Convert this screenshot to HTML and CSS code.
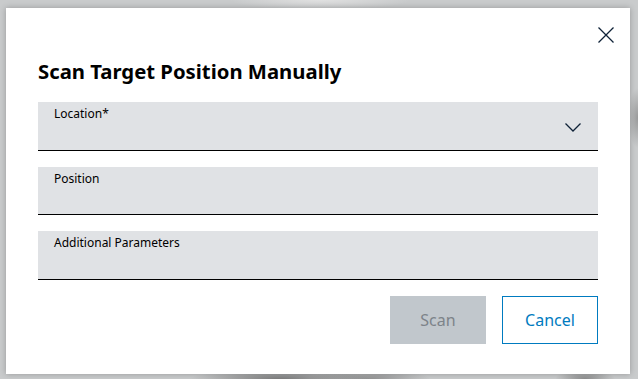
FILE: index.html
```html
<!DOCTYPE html>
<html lang="en">
<head>
<meta charset="utf-8">
<title>Scan Target Position Manually</title>
<link rel="stylesheet" href="styles.css">
</head>
<body>
<div class="backdrop">
  <div class="dialog" role="dialog" aria-labelledby="dlg-title">
    <button class="close" aria-label="Close">
      <svg width="16" height="16" viewBox="0 0 16 16" aria-hidden="true">
        <path d="M0.5 0.5 L15.5 15.5 M15.5 0.5 L0.5 15.5" stroke="currentColor" stroke-width="1.3" fill="none"/>
      </svg>
    </button>
    <h1 class="title" id="dlg-title">Scan Target Position Manually</h1>
    <div class="fields">
      <div class="field select">
        <span class="label">Location*</span>
        <svg class="chevron" width="16" height="9" viewBox="0 0 16 9" aria-hidden="true">
          <path d="M0.5 0.5 L8 8 L15.5 0.5" stroke="currentColor" stroke-width="1.3" fill="none"/>
        </svg>
      </div>
      <div class="field">
        <span class="label">Position</span>
      </div>
      <div class="field">
        <span class="label">Additional Parameters</span>
      </div>
    </div>
    <div class="actions">
      <button class="btn btn-primary" disabled>Scan</button>
      <button class="btn btn-secondary">Cancel</button>
    </div>
  </div>
</div>
</body>
</html>
```

FILE: styles.css
```css
html, body {
  margin: 0;
  padding: 0;
}

body {
  width: 638px;
  height: 379px;
  overflow: hidden;
  font-family: "Noto Sans", "Open Sans", sans-serif;
  background:
    radial-gradient(ellipse 90px 10px at 280px 379px, rgba(90,90,90,0.7), rgba(90,90,90,0) 100%),
    radial-gradient(ellipse 60px 10px at 370px 379px, rgba(110,110,110,0.6), rgba(110,110,110,0) 100%),
    radial-gradient(ellipse 30px 10px at 585px 379px, rgba(100,100,100,0.6), rgba(100,100,100,0) 100%),
    radial-gradient(ellipse 10px 30px at 638px 118px, rgba(120,120,120,0.6), rgba(120,120,120,0) 100%),
    radial-gradient(ellipse 90px 10px at 320px 0px, rgba(230,230,230,0.8), rgba(230,230,230,0) 100%),
    #c9cbcc;
}

.backdrop {
  padding: 8px 8px 0 6px;
}

.dialog {
  position: relative;
  box-sizing: border-box;
  width: 624px;
  height: 366px;
  background: #ffffff;
  padding: 0 32px;
  box-shadow: 0 0 6px rgba(0, 0, 0, 0.25);
}

.close {
  position: absolute;
  top: 19px;
  right: 16px;
  width: 16px;
  height: 16px;
  padding: 0;
  border: 0;
  background: transparent;
  color: #0f2238;
  display: flex;
}

.title {
  margin: 0;
  padding-top: 49px;
  font-size: 20.3px;
  line-height: 28px;
  font-weight: 700;
  color: #000000;
}

.fields {
  display: flex;
  flex-direction: column;
  gap: 16px;
  margin-top: 17px;
}

.field {
  position: relative;
  box-sizing: border-box;
  height: 48.5px;
  background: #e0e2e5;
  border-bottom: 1px solid #000000;
  padding: 4px 16px 0;
}

.label {
  display: block;
  font-size: 12px;
  line-height: 16px;
  color: #000000;
}

.select .chevron {
  position: absolute;
  right: 17px;
  top: 21px;
  color: #0f2238;
}

.actions {
  display: flex;
  justify-content: flex-end;
  gap: 16px;
  margin-top: 16px;
}

.btn {
  width: 96px;
  height: 48px;
  box-sizing: border-box;
  font-family: "Noto Sans", "Open Sans", sans-serif;
  font-size: 16px;
  padding: 0;
  cursor: pointer;
}

.btn-primary {
  background: #c1c7cc;
  border: 0;
  color: #7d8389;
}

.btn-secondary {
  background: #ffffff;
  border: 1px solid #007bc0;
  color: #007bc0;
}
```
